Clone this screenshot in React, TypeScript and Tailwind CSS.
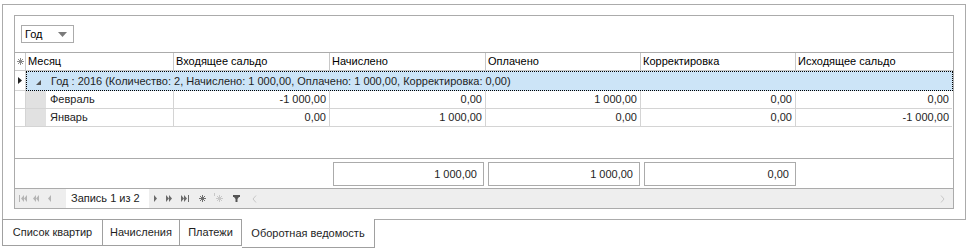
import React from "react";

const font = { fontFamily: '"Liberation Sans", Arial, sans-serif' };

const columns = [
    { title: "Месяц", w: "w-[148px]" },
    { title: "Входящее сальдо", w: "w-[156px]" },
    { title: "Начислено", w: "w-[156px]" },
    { title: "Оплачено", w: "w-[155px]" },
    { title: "Корректировка", w: "w-[155px]" },
    { title: "Исходящее сальдо", w: "w-[156px]" },
];

const rows = [
    { month: "Февраль", values: ["-1 000,00", "0,00", "1 000,00", "0,00", "0,00"] },
    { month: "Январь", values: ["0,00", "1 000,00", "0,00", "0,00", "-1 000,00"] },
];

function Star({ color }: { color: string }) {
    return (
        <svg width="7" height="7" viewBox="0 0 7 7" stroke={color} strokeWidth="1" shapeRendering="crispEdges">
            <line x1="3.5" y1="0" x2="3.5" y2="7" />
            <line x1="0" y1="3.5" x2="7" y2="3.5" />
            <line x1="1" y1="1" x2="6" y2="6" />
            <line x1="6" y1="1" x2="1" y2="6" />
        </svg>
    );
}

function Tri({ dir, color, bar, double }: { dir: "l" | "r"; color: string; bar?: boolean; double?: boolean }) {
    const one = dir === "l" ? "3,0 0,3.5 3,7" : "0,0 3,3.5 0,7";
    const two = dir === "l" ? "6,0 3,3.5 6,7" : "3,0 6,3.5 3,7";
    const w = bar ? 8 : double ? 6 : 3;
    return (
        <svg width={w} height="7" viewBox={`0 0 ${w} 7`} fill={color}>
            {dir === "l" ? (
                <g transform={bar ? "translate(2,0)" : undefined}>
                    <polygon points={one} />
                    {(double || bar) && <polygon points={two} />}
                </g>
            ) : (
                <g>
                    <polygon points={one} />
                    {(double || bar) && <polygon points={two} />}
                </g>
            )}
            {bar && <rect x={dir === "l" ? 0 : 7} y="0" width="1" height="7" />}
        </svg>
    );
}

function NavSlot({ className, children }: { className: string; children: React.ReactNode }) {
    return <div className={`flex shrink-0 items-center justify-center ${className}`}>{children}</div>;
}

function Navigator() {
    return (
        <div className="flex h-[20px] items-center border-t border-[#ababab] bg-[#eeeeee] text-[11px] text-[#222]">
            <NavSlot className="ml-[2px] w-[12px]">
                <Tri dir="l" color="#b4b4b4" bar />
            </NavSlot>
            <NavSlot className="w-[13px]">
                <Tri dir="l" color="#b4b4b4" double />
            </NavSlot>
            <NavSlot className="w-[14px]">
                <Tri dir="l" color="#b4b4b4" />
            </NavSlot>
            <div className="ml-[10px] flex h-full w-[83px] items-center bg-white pl-[5px]">Запись 1 из 2</div>
            <NavSlot className="w-[12px]">
                <Tri dir="r" color="#6a6a6a" />
            </NavSlot>
            <NavSlot className="w-[16px]">
                <Tri dir="r" color="#6a6a6a" double />
            </NavSlot>
            <NavSlot className="w-[16px]">
                <Tri dir="r" color="#6a6a6a" bar />
            </NavSlot>
            <NavSlot className="w-[18px]">
                <Star color="#707070" />
            </NavSlot>
            <NavSlot className="w-[17px]">
                <div className="relative">
                    <Star color="#c8c8c8" />
                    <div className="absolute -left-[2px] -top-[2px] h-[3px] w-[1px] bg-[#c8c8c8]" />
                </div>
            </NavSlot>
            <NavSlot className="w-[17px]">
                <svg width="7" height="7" viewBox="0 0 7 7" fill="#555">
                    <rect x="0" y="0" width="7" height="2" />
                    <polygon points="1,2 6,2 4.5,4 4.5,7 2.5,7 2.5,4" />
                </svg>
            </NavSlot>
            <NavSlot className="w-[18px]">
                <svg width="5" height="8" viewBox="0 0 5 8" fill="none" stroke="#c8c8c8" strokeWidth="1">
                    <polyline points="4,0.5 1,4 4,7.5" />
                </svg>
            </NavSlot>
            <div className="flex-1" />
            <NavSlot className="mr-[6px] w-[10px]">
                <svg width="5" height="8" viewBox="0 0 5 8" fill="none" stroke="#c8c8c8" strokeWidth="1">
                    <polyline points="1,0.5 4,4 1,7.5" />
                </svg>
            </NavSlot>
        </div>
    );
}

function Grid() {
    return (
        <div className="flex h-[194px] w-[940px] flex-col border border-[#ababab] bg-white text-[11px] text-[#1e1e1e]">
            {/* group panel */}
            <div className="h-[37px] shrink-0 border-b border-[#ababab] pl-[6px] pt-[9px]">
                <div className="flex h-[18px] w-[53px] items-center border border-[#ababab] pl-[3px]">
                    <span className="flex-1 text-black">Год</span>
                    <svg width="9" height="5" viewBox="0 0 9 5" className="mr-[6px]" fill="#7a7a7a">
                        <polygon points="0,0 9,0 4.5,5" />
                    </svg>
                </div>
            </div>
            {/* header */}
            <div className="flex h-[18px] shrink-0 border-b border-[#c8c8c8]">
                <div className="flex w-[11px] items-center justify-center border-r border-[#c8c8c8]">
                    <Star color="#8a8a8a" />
                </div>
                {columns.map((c, i) => (
                    <div key={c.title} className={`${c.w} flex items-center px-[2px] text-black ${i < columns.length - 1 ? "border-r border-[#c8c8c8]" : ""}`}>
                        {c.title}
                    </div>
                ))}
            </div>
            {/* group row */}
            <div className="flex h-[20px] shrink-0">
                <div className="flex w-[11px] items-center justify-center border-r border-b border-[#d4d4d4]">
                    <svg width="4" height="7" viewBox="0 0 4 7" fill="#222">
                        <polygon points="0,0 4,3.5 0,7" />
                    </svg>
                </div>
                <div className="flex flex-1 items-center border border-dotted border-black bg-[#cce4f7] pl-[9px] text-[#1e1e1e]">
                    <svg width="5" height="5" viewBox="0 0 5 5" fill="#555" className="mr-[10px] mt-[2px]">
                        <polygon points="5,0 5,5 0,5" />
                    </svg>
                    Год : 2016 (Количество: 2, Начислено: 1 000,00, Оплачено: 1 000,00, Корректировка: 0,00)
                </div>
            </div>
            {/* data rows */}
            {rows.map((r) => (
                <div key={r.month} className="flex h-[18px] shrink-0">
                    <div className="w-[11px] border-r border-b border-[#d4d4d4]" />
                    <div className="flex w-[148px] border-r border-b border-[#d4d4d4]">
                        <div className="w-[20px] bg-[#e1e1e1]" />
                        <div className="flex items-center pl-[4px]">{r.month}</div>
                    </div>
                    {r.values.map((v, i) => (
                        <div
                            key={i}
                            className={`${columns[i + 1].w} flex items-center justify-end border-b border-[#d4d4d4] pr-[3px] ${i < r.values.length - 1 ? "border-r" : ""}`}
                        >
                            {v}
                        </div>
                    ))}
                </div>
            ))}
            <div className="flex-1" />
            {/* footer */}
            <div className="flex h-[30px] shrink-0 border-t border-[#ababab] pt-[3px]">
                <div className="w-[318px]" />
                <div className="flex h-[24px] w-[151px] items-center justify-end border border-[#ababab] pr-[6px]">1 000,00</div>
                <div className="ml-[4px] flex h-[24px] w-[152px] items-center justify-end border border-[#ababab] pr-[6px]">1 000,00</div>
                <div className="ml-[4px] flex h-[24px] w-[152px] items-center justify-end border border-[#ababab] pr-[6px]">0,00</div>
            </div>
            <Navigator />
        </div>
    );
}

const tabs = [
    { label: "Список квартир", w: "w-[101px]" },
    { label: "Начисления", w: "w-[77px]" },
    { label: "Платежи", w: "w-[62px]" },
];

export default function App() {
    return (
        <div className="h-[252px] w-[970px] overflow-hidden bg-white" style={font}>
            <div className="ml-[2px] mt-[4px] h-[215px] w-[964px] border-x border-t border-[#ababab] pl-[11px] pt-[10px]">
                <Grid />
            </div>
            <div className="ml-[2px] flex text-[11px] text-[#1e1e1e]">
                {tabs.map((t, i) => (
                    <div
                        key={t.label}
                        className={`${t.w} flex h-[27px] items-center justify-center border-y border-r border-[#a0a0a0] bg-white ${i === 0 ? "border-l" : ""}`}
                    >
                        {t.label}
                    </div>
                ))}
                <div className="flex h-[29px] w-[133px] items-center justify-center border-r border-b border-[#a0a0a0] bg-white">
                    Оборотная ведомость
                </div>
                <div className="h-[1px] w-[591px] bg-[#ababab]" />
            </div>
        </div>
    );
}
